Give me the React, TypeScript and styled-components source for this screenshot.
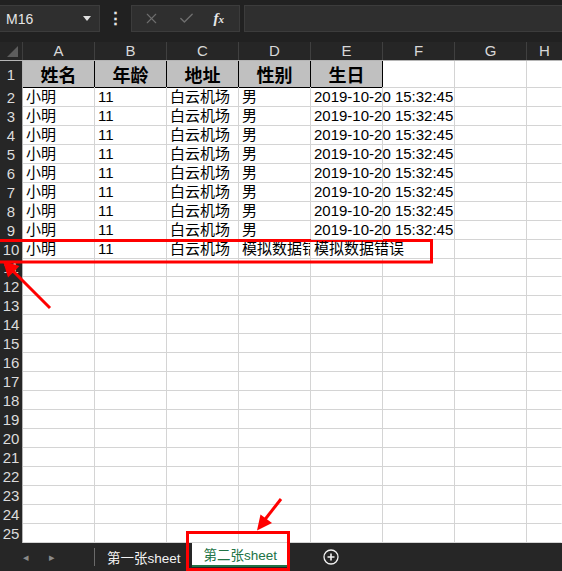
import styled, { createGlobalStyle } from "styled-components"
import { X, Check } from "lucide-react"

const GlobalStyle = createGlobalStyle`
  html, body {
    margin: 0;
    padding: 0;
    background: #262626;
  }
  body {
    font-family: "Liberation Sans", "Noto Sans CJK SC", sans-serif;
  }
`

const columns = ["A", "B", "C", "D", "E", "F", "G", "H"]
const titles = ["姓名", "年龄", "地址", "性别", "生日"]
const dataRows = Array.from({ length: 8 }, (_, i) => i + 2)
const emptyRows = Array.from({ length: 15 }, (_, i) => i + 11)

export default function App() {
  return (
    <Frame>
      <GlobalStyle />
      <TopBar>
        <NameBox>
          <span>M16</span>
          <Caret />
        </NameBox>
        <Dots>⋮</Dots>
        <FormulaButtons>
          <X size={17} strokeWidth={1.6} />
          <Check size={17} strokeWidth={2} />
          <Fx><i>f</i><small>x</small></Fx>
        </FormulaButtons>
        <FormulaInput />
      </TopBar>

      <Sheet>
        <HeaderRow>
          <Corner><span /></Corner>
          {columns.map(c => <ColHead key={c}>{c}</ColHead>)}
        </HeaderRow>

        <Row height={26}>
          <RowHead>1</RowHead>
          {titles.map(t => <TitleCell key={t}>{t}</TitleCell>)}
          <Cell />
          <Cell />
          <Cell $last />
        </Row>

        {dataRows.map(n => (
          <Row key={n} height={19}>
            <RowHead>{n}</RowHead>
            <Cell>小明</Cell>
            <Cell>11</Cell>
            <Cell>白云机场</Cell>
            <Cell>男</Cell>
            <Cell $overflow>2019-10-20 15:32:45</Cell>
            <Cell />
            <Cell />
            <Cell $last />
          </Row>
        ))}

        <Row height={19}>
          <RowHead>10</RowHead>
          <Cell>小明</Cell>
          <Cell>11</Cell>
          <Cell>白云机场</Cell>
          <Cell>模拟数据错误</Cell>
          <Cell $overflow $noRight>模拟数据错误</Cell>
          <Cell />
          <Cell />
          <Cell $last />
        </Row>

        {emptyRows.map(n => (
          <Row key={n} height={19}>
            <RowHead>{n}</RowHead>
            {columns.map((c, i) => <Cell key={c} $last={i === columns.length - 1} />)}
          </Row>
        ))}
      </Sheet>

      <TabBar>
        <NavArrows>
          <Arrow>◂</Arrow>
          <Arrow>▸</Arrow>
        </NavArrows>
        <TabDivider />
        <Tab>第一张sheet</Tab>
        <Tab $active>第二张sheet</Tab>
        <AddSheet>
          <svg width="16" height="16" viewBox="0 0 16 16">
            <circle cx="8" cy="8" r="7" fill="none" stroke="#f2f2f2" strokeWidth="1.3" />
            <path d="M8 4.5v7M4.5 8h7" stroke="#f2f2f2" strokeWidth="1.6" />
          </svg>
        </AddSheet>
      </TabBar>

      <Annotations viewBox="0 0 562 571">
        <rect x="-5" y="240.5" width="436.5" height="21.5" fill="none" stroke="#f00" strokeWidth="3" />
        <line x1="50" y1="308" x2="12" y2="270" stroke="#f00" strokeWidth="3" />
        <polygon points="3,261 19.5,266 8,277.5" fill="#f00" />
        <rect x="187.5" y="532.5" width="101" height="37" fill="none" stroke="#f00" strokeWidth="3" />
        <line x1="281" y1="499" x2="263" y2="522" stroke="#f00" strokeWidth="3" />
        <polygon points="257,530.5 260.5,514.5 272,523" fill="#f00" />
      </Annotations>
    </Frame>
  )
}

const Frame = styled.div`
  position: relative;
  width: 562px;
  height: 571px;
  overflow: hidden;
  display: flex;
  flex-direction: column;
  background: #212121;
`

const TopBar = styled.div`
  height: 43px;
  box-sizing: border-box;
  padding-top: 5px;
  display: flex;
  align-items: flex-start;
  background: #212121;
`

const NameBox = styled.div`
  width: 100px;
  height: 27px;
  box-sizing: border-box;
  background: #2f2f2f;
  border: 1px solid #3c3c3c;
  border-left: none;
  display: flex;
  align-items: center;
  justify-content: space-between;
  padding: 0 8px 0 6px;
  color: #e6e6e6;
  font-size: 14px;
`

const Caret = styled.span`
  width: 0;
  height: 0;
  border-left: 4.5px solid transparent;
  border-right: 4.5px solid transparent;
  border-top: 5px solid #e0e0e0;
`

const Dots = styled.div`
  width: 31px;
  height: 27px;
  display: flex;
  align-items: center;
  justify-content: center;
  color: #e6e6e6;
  font-size: 17px;
  font-weight: bold;
`

const FormulaButtons = styled.div`
  width: 109px;
  height: 27px;
  box-sizing: border-box;
  background: #2f2f2f;
  border: 1px solid #3c3c3c;
  display: flex;
  align-items: center;
  justify-content: space-around;
  padding: 0 6px 0 2px;
  color: #6e6e6e;
`

const Fx = styled.span`
  color: #e8e8e8;
  font-family: "Liberation Serif", serif;
  font-weight: bold;
  font-size: 15px;
  i {
    font-style: italic;
  }
  small {
    font-size: 11px;
    font-style: italic;
  }
`

const FormulaInput = styled.div`
  flex: 1;
  height: 27px;
  margin-left: 4px;
  box-sizing: border-box;
  background: #2f2f2f;
  border: 1px solid #3c3c3c;
  border-right: none;
`

const Sheet = styled.div`
  flex: 1;
  display: flex;
  flex-direction: column;
  background: #ffffff;
`

const gridCols = `23px repeat(7, 72px) 1fr`

const HeaderRow = styled.div`
  display: grid;
  grid-template-columns: ${gridCols};
  height: 18px;
  background: #262626;
  border-bottom: 1px solid #b5b5b5;
`

const Corner = styled.div`
  position: relative;
  border-right: 1px solid #3e3e3e;
  span {
    position: absolute;
    right: 4px;
    bottom: 3px;
    width: 0;
    height: 0;
    border-left: 11px solid transparent;
    border-bottom: 11px solid #5d5d5d;
  }
`

const ColHead = styled.div`
  border-right: 1px solid #404040;
  color: #d8d8d8;
  font-size: 15px;
  line-height: 18px;
  text-align: center;
  &:last-child {
    border-right: none;
  }
`

const Row = styled.div<{ height: number }>`
  display: grid;
  grid-template-columns: ${gridCols};
  height: ${p => p.height}px;
  box-sizing: border-box;
`

const RowHead = styled.div`
  background: #262626;
  color: #dcdcdc;
  border-right: 1px solid #b5b5b5;
  font-size: 15px;
  display: flex;
  align-items: center;
  justify-content: center;
`

const TitleCell = styled.div`
  background: #c0c0c0;
  border-right: 1px solid #000;
  border-bottom: 1px solid #000;
  color: #000;
  font-family: "Noto Sans CJK SC", sans-serif;
  font-weight: 700;
  font-size: 18px;
  display: flex;
  align-items: center;
  justify-content: center;
`

const Cell = styled.div<{ $overflow?: boolean; $noRight?: boolean; $last?: boolean }>`
  position: relative;
  z-index: ${p => (p.$overflow ? 1 : 0)};
  border-right: 1px solid ${p => (p.$noRight || p.$last ? "transparent" : "#d4d4d4")};
  border-bottom: 1px solid #d4d4d4;
  padding-left: 3px;
  color: #000;
  font-size: 15px;
  line-height: 19px;
  white-space: nowrap;
  overflow: ${p => (p.$overflow ? "visible" : "hidden")};
`

const TabBar = styled.div`
  height: 28px;
  background: #262626;
  display: flex;
  align-items: center;
`

const NavArrows = styled.div`
  width: 94px;
  display: flex;
  justify-content: center;
  gap: 20px;
  padding-right: 16px;
  box-sizing: border-box;
`

const Arrow = styled.span`
  color: #8a8a8a;
  font-size: 11px;
`

const TabDivider = styled.div`
  width: 1px;
  height: 18px;
  background: #6a6a6a;
`

const Tab = styled.div<{ $active?: boolean }>`
  height: ${p => (p.$active ? "24px" : "28px")};
  align-self: ${p => (p.$active ? "flex-start" : "center")};
  padding: 0 11px 0 12px;
  display: flex;
  align-items: center;
  box-sizing: border-box;
  background: ${p => (p.$active ? "#ffffff" : "transparent")};
  color: ${p => (p.$active ? "#217346" : "#f2f2f2")};
  border-bottom: ${p => (p.$active ? "2px solid #217346" : "none")};
  font-size: 13.5px;
`

const AddSheet = styled.div`
  margin-left: 35px;
  display: flex;
  align-items: center;
`

const Annotations = styled.svg`
  position: absolute;
  left: 0;
  top: 0;
  width: 562px;
  height: 571px;
  pointer-events: none;
`
